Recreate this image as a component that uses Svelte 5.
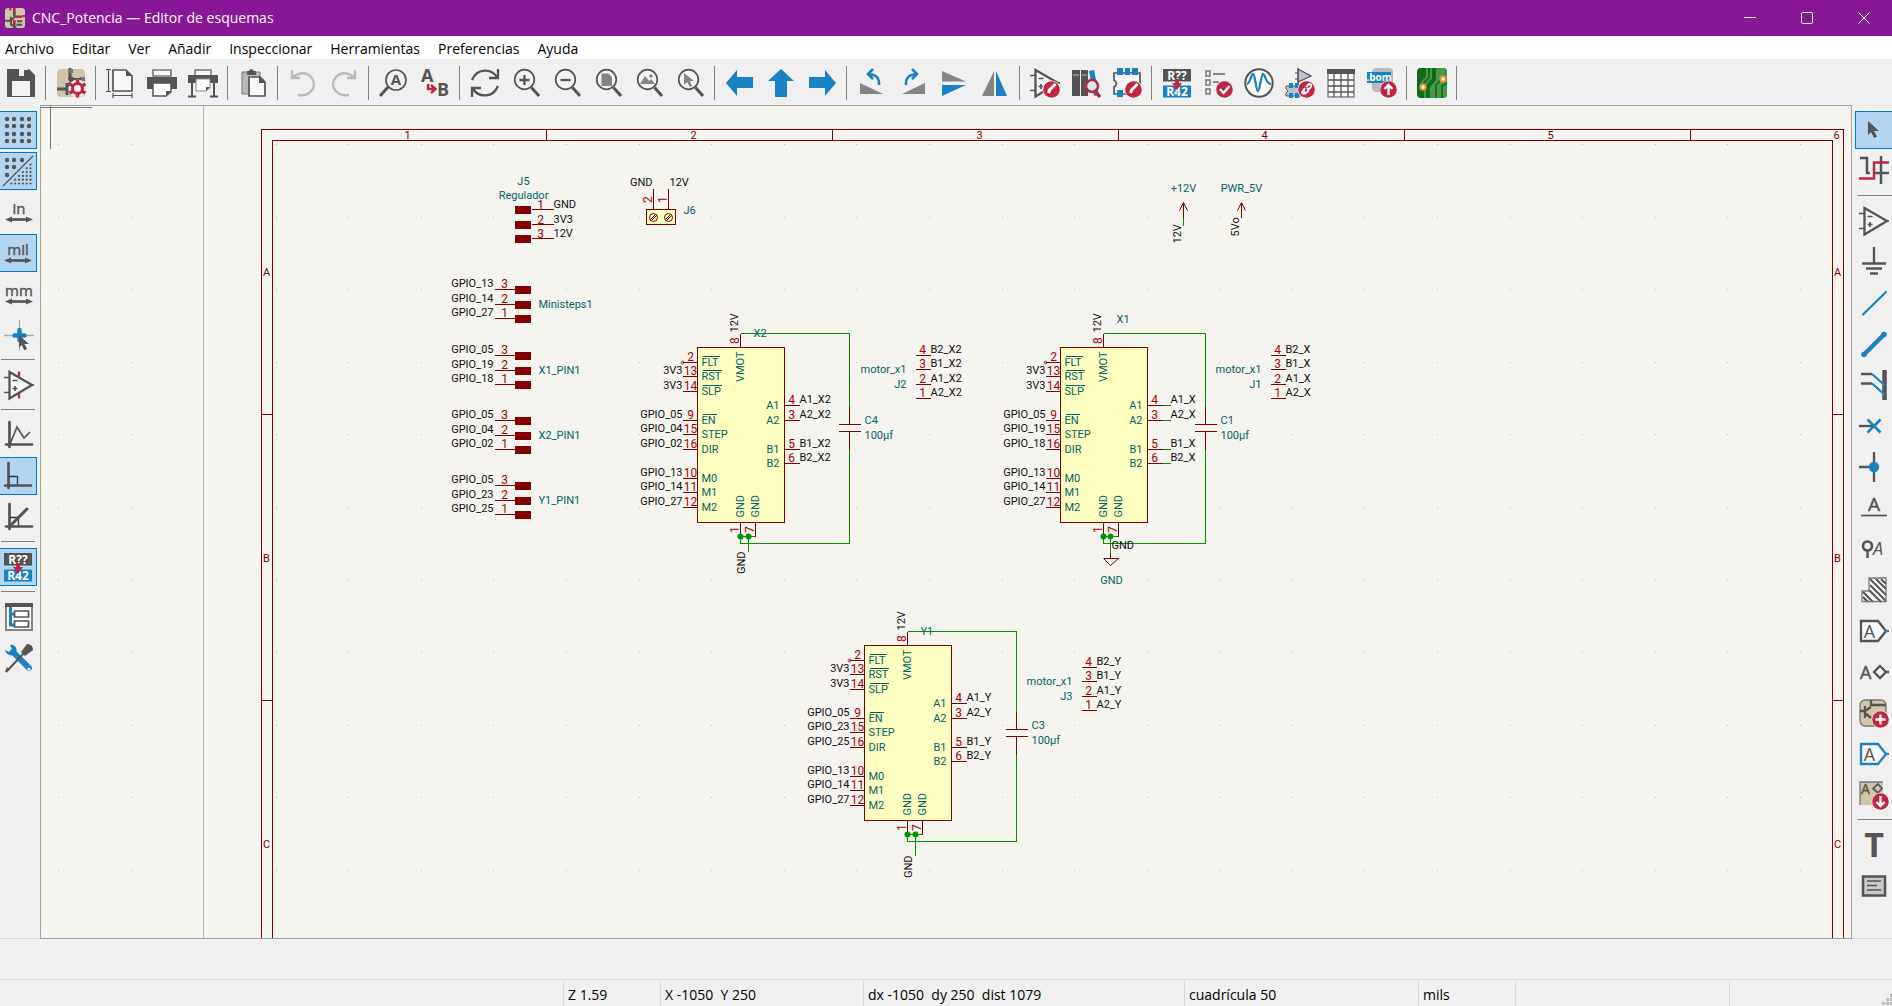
<!-- SchematicEditor -->
<script>
  const menus = ['Archivo', 'Editar', 'Ver', 'Añadir', 'Inspeccionar', 'Herramientas', 'Preferencias', 'Ayuda'];

  const status = [
    { text: '', cls: 'grow' },
    { text: 'Z 1.59', cls: 'small' },
    { text: 'X -1050  Y 250', cls: 'medium' },
    { text: 'dx -1050  dy 250  dist 1079', cls: 'large' },
    { text: 'cuadrícula 50', cls: 'wide' },
    { text: 'mils', cls: 'small' },
    { text: '', cls: 'message' },
    { text: '', cls: 'last' }
  ];

  // shared icon parts, all on a 30x30 grid
  const D = '#545454';
  const B = '#1a81c4';
  const R = '#bf2641';
  const lens = `<circle cx="13.500" cy="11.500" r="9.800" fill="#f3f3f3" stroke="${D}" stroke-width="1.700"/><path d="M20.500 19.500L28 28" stroke="${D}" stroke-width="3"/>`;
  const badge = (mark) => `<circle cx="21.500" cy="21.500" r="9" fill="#f0f0f0"/><circle cx="21.500" cy="21.500" r="8.300" fill="${R}"/><g fill="none" stroke="#fff" stroke-width="2.300">${mark}</g>`;
  const pencil = '<path d="M18.500 25l1-3 6-6" stroke-width="3"/>';
  const opamp = `<path d="M5.500 2L28 15 5.500 28.500z" fill="#f5f5f5" stroke="${D}" stroke-width="2.300"/><path d="M0 7.500h5M0 22.500h5M26 15h4M8.500 10.500h5M8.500 18.500h5M11 16v5" stroke="${D}" stroke-width="1.700"/>`;
  const annotate = `<rect x="1" y="1" width="28" height="12.500" fill="${D}"/><rect x="1" y="17.500" width="28" height="12" fill="${B}"/><text x="15" y="11.500" font-size="12" font-weight="700" fill="#fff" text-anchor="middle">R??</text><text x="15" y="28" font-size="12" font-weight="700" fill="#fff" text-anchor="middle">R42</text><path d="M13 11h4v4h3l-5 7-5-7h3z" fill="${R}"/>`;
  const arrowX = `<path d="M5 22.500h20" stroke="${D}" stroke-width="2.700"/><path d="M1 22.500l7-3v6zM29 22.500l-7-3v6z" fill="${D}"/>`;
  const unit = (name) => `<text x="15" y="17" font-size="15" fill="${D}" stroke="${D}" stroke-width="0.400" text-anchor="middle">${name}</text>${arrowX}`;
  const axes = `<path d="M5.500 2v25M2 24.500h26" stroke="${D}" stroke-width="2.700" stroke-linecap="round"/>`;
  const tag = (c) => `<path d="M2 5h17l8 10-8 10H2z" fill="#f8f8f8" stroke="${c}" stroke-width="2.300"/><path d="M26 15h4" stroke="${B}" stroke-width="2.300"/><text x="10.500" y="22" font-size="18" text-anchor="middle" fill="${D}">A</text>`;
  const cursor = (x, y, s) => `<path transform="translate(${x} ${y}) scale(${s})" d="M0 0v14l3-3 3 6 3-1.500-3-5.500h5z" fill="${D}"/>`;

  const icons = {
    app: `<rect width="30" height="30" rx="5" fill="#d1c4a9"/><path d="M14 0v12M14 18v12" stroke="${R}" stroke-width="4"/><path d="M14 6v7h4M0 19h9M9 13v12l8 4M9 19l6-6" stroke="${D}" stroke-width="3" fill="none"/><path d="M17 13h9" stroke="${R}" stroke-width="3.500"/><path d="M26 12h4M6 2h4M18 20h8M17 25h9" stroke="${D}" stroke-width="3"/>`,
    save: `<path d="M1 1H23l6 6v22H1z" fill="${D}"/><path d="M9 1h13v9H9z" fill="#f0f0f0"/><path d="M9 1h4v7h5V2h4v8H9z" fill="${D}"/><path d="M6 13h18v15H6z" fill="#f3f3f3"/>`,
    setup: `<rect x="1" y="1" width="28" height="28" rx="4" fill="#d1c4a9"/><path d="M14 0v10l6 3M1 21h10M11 15v12M11 19l6-7" stroke="${D}" stroke-width="3" fill="none"/><circle cx="15" cy="11" r="2.700" fill="${D}"/><path d="M12 1h5v4h-5zM24 9h5v4h-5z" fill="#777"/><path d="M15 11h10" stroke="${D}" stroke-width="2"/><circle cx="21.500" cy="20.500" r="7" fill="none" stroke="#f0f0f0" stroke-width="4"/><circle cx="21.500" cy="20.500" r="5" fill="#f0f0f0" stroke="${R}" stroke-width="3"/><g stroke="${R}" stroke-width="3.500"><path d="M21.500 11.500v4M21.500 25.500v4M13.500 16l4 2M29.500 16l-4 2M13.500 25l4-2M29.500 25l-4-2"/></g>`,
    page: `<path d="M7 2h13l6 6v15H7z" fill="#f8f8f8" stroke="${D}" stroke-width="1.700"/><path d="M20 2l6 6h-6z" fill="${D}"/><path d="M2.500 2v21M0 1.500h5M0 23.500h5M7 27.500h19M7 25v5M26 25v5" stroke="${D}" stroke-width="1.200"/>`,
    print: `<path d="M6 2h18v6H6z" fill="#f5f5f5" stroke="#777" stroke-width="1.700"/><path d="M0 9h30v12H0z" fill="${D}"/><path d="M6 15h18v9l-5 4H6z" fill="#fff" stroke="${D}" stroke-width="1.500"/><path d="M24 23l-5 5v-5z" fill="${D}"/>`,
    plot: `<path d="M7 2h16v6H7z" fill="#f5f5f5" stroke="#777" stroke-width="1.500"/><path d="M0 7h30v8H0z" fill="${D}"/><path d="M4 15v13M26 15v13M0 28.500h8M22 28.500h8" stroke="${D}" stroke-width="2"/><path d="M8 11h14v9l-4 3H8z" fill="#fff" stroke="#888"/><path d="M22 19l-4 4v-4z" fill="${D}"/>`,
    paste: `<path d="M4 4h18v22H4z" fill="#b9b9b9" stroke="#777"/><path d="M9 3h2q2-4 5 0h2v4H9z" fill="${D}"/><path d="M11 9h11l5 5v14H11z" fill="#f8f8f8" stroke="${D}" stroke-width="1.700"/><path d="M21 8l7 7h-7z" fill="${D}"/>`,
    undo: `<path d="M4 2v8h8M4 10Q15 1 23 9c8 10-2 20-13 18" fill="none" stroke="#b9b9b9" stroke-width="2.300"/>`,
    redo: `<path d="M26 2v8h-8M26 10Q15 1 7 9c-8 10 2 20 13 18" fill="none" stroke="#b9b9b9" stroke-width="2.300"/>`,
    find: `<circle cx="17" cy="12" r="10" fill="#f3f3f3" stroke="${D}" stroke-width="1.700"/><path d="M9 19L1 28" stroke="${D}" stroke-width="3"/><text x="17" y="17" font-size="15" font-weight="700" fill="${D}" text-anchor="middle">A</text>`,
    replace: `<text x="1" y="14" font-size="18" font-weight="700" fill="${D}">A</text><text x="17" y="28" font-size="18" font-weight="700" fill="${D}">B</text><path d="M8 16v5h7M11 17l4.500 4-4.500 4" fill="none" stroke="${R}" stroke-width="2.500"/>`,
    refresh: `<path d="M2 12C7 0 21 0 27 9M28 1v9h-9M28 18C23 30 9 30 3 21M2 29v-9h9" fill="none" stroke="${D}" stroke-width="2.300"/>`,
    zoomIn: `${lens}<path d="M8.500 12h10M13.500 7v10" stroke="${D}" stroke-width="2.300"/>`,
    zoomOut: `${lens}<path d="M8.500 12h10" stroke="${D}" stroke-width="2.300"/>`,
    zoomPage: `${lens}<path d="M8.500 5.500h7l3.500 3.500v9H8.500z" fill="#848484"/>`,
    zoomObjects: `${lens}<path d="M6 16l5-8 4 5 2-2 4 5z" fill="#848484"/><circle cx="17" cy="8" r="1.700" fill="#848484"/>`,
    zoomSelection: `${lens}<path d="M9 5v12l3-3 3 5 2-1-2-5h4z" fill="#848484"/>`,
    left: `<path d="M1 15L12 2v7h16v11H12v8z" fill="${B}"/>`,
    up: `<path d="M15 1l13 12h-7v16H9V13H2z" fill="${B}"/>`,
    right: `<path d="M29 15L18 2v7H2v11h16v8z" fill="${B}"/>`,
    rotateLeft: `<path d="M3 15l23 11H3z" fill="#848484"/><path d="M22 17q1-10-10-11M16 1l-5 5 5 5" fill="none" stroke="${B}" stroke-width="2.500"/>`,
    rotateRight: `<path d="M27 15L4 26h23z" fill="#848484"/><path d="M8 17q-1-10 10-11M14 1l5 5-5 5" fill="none" stroke="${B}" stroke-width="2.500"/>`,
    mirrorV: `<path d="M3 3l24 10.500H3z" fill="#848484"/><path d="M3 28l24-11H3z" fill="${B}"/>`,
    mirrorH: `<path d="M14 3v25H2z" fill="#848484"/><path d="M16 3v25h11z" fill="${B}"/>`,
    symbolEditor: `${opamp}${badge(pencil)}`,
    browser: `<path d="M1 2h8v26H1zM10 2h7v26h-7z" fill="${D}"/><path d="M18 3l5-1 5 25-5 1z" fill="${B}"/><path d="M2 7h6M11 7h5" stroke="#999" stroke-width="1.500"/><circle cx="21" cy="18" r="6" fill="#dce8f4" stroke="${R}" stroke-width="2.500"/><path d="M24 23l5 6" stroke="${R}" stroke-width="3.500"/>`,
    footprintEditor: `<path d="M2 5h26v21H2v-7q5-3.500 0-7z" fill="#f5f5f5" stroke="${D}" stroke-width="1.700"/><path d="M5 0h6v7H5zM13 0h5v7h-5zM20 0h6v7h-6zM5 22h6v7H5z" fill="${B}"/>${badge(pencil)}`,
    annotate,
    erc: `<path d="M3 3h4v5H3zM3 12h4v5H3zM3 21h4v5H3z" fill="none" stroke="#777" stroke-width="1.500"/><path d="M10 6h12M10 14h6" stroke="#888" stroke-width="2"/>${badge('<path d="M17 21l3.500 4 6-7"/>')}`,
    sim: `<circle cx="15" cy="15" r="13.700" fill="#fff" stroke="${D}" stroke-width="2"/><path d="M3 16c3 0 4-10 6-10s3 17 5 17 3-17 5-17 3 10 8 10" fill="none" stroke="${B}" stroke-width="2.300"/>`,
    assign: `<path d="M13 1l13 7-13 6z" fill="#b9c4d0" stroke="${D}" stroke-width="1.300"/><path d="M10 5h3M10 11h3M13 0v15" stroke="${D}"/><path d="M1 18h16v10H1v-3l2-2-2-2z" fill="#b9c4d0" stroke="${D}"/><path d="M4 15h4v5H4zM10 15h4v5h-4zM4 25h4v5H4zM10 25h4v5h-4z" fill="${B}"/>${badge('<path d="M20 23l-2 2m3-6l3-3q3 0 2 3l-3 3M22 20q3 3-1 5t-4-1l3-4" stroke-width="1.800"/>')}`,
    table: `<path d="M2 2h26v27H2z" fill="#fafafa" stroke="#848484" stroke-width="1.500"/><path d="M1 1h28v5H1z" fill="${D}"/><path d="M2 12h26M2 18h26M2 24h26M8 6v23M15 6v23M22 6v23" stroke="${D}" stroke-width="1.300"/>`,
    bom: `<rect x="5" y="0" width="21" height="24" rx="4" fill="#b9b9b9"/><path d="M0 4h24v11H0z" fill="${B}"/><text x="12" y="13" font-size="10" font-weight="700" fill="#fff" text-anchor="middle">.bom</text>${badge('<path d="M21.500 27V17M17.500 21l4-4 4 4"/>')}`,
    pcb: `<rect x="0" y="0" width="30" height="30" rx="4" fill="#0b6b1b"/><path d="M22 0h4q4 0 4 4v22q0 4-4 4H12V19l6-6V0z" fill="#489648"/><path d="M10 0v9l-5 5v4M14 0v10l-6 7v13" fill="none" stroke="#489648" stroke-width="2"/><path d="M18 0v12l-6 7v11M30 15l-5 3v12M25 11l-6 6v13" fill="none" stroke="#0b6b1b" stroke-width="1.700"/><circle cx="6" cy="19" r="2.700" fill="#fff" stroke="#e8951b" stroke-width="2"/><circle cx="26" cy="11" r="2.700" fill="#fff" stroke="#e8951b" stroke-width="2"/>`,
    grid: [4, 11, 19, 26].map((x) => [4, 11, 19, 26].map((y) => `<circle cx="${x}" cy="${y}" r="2.200" fill="${D}"/>`).join('')).join(''),
    gridOverride: `${[[4, 4], [11, 4], [19, 4], [4, 11], [11, 11], [4, 19]].map(([x, y]) => `<circle cx="${x}" cy="${y}" r="2.200" fill="${D}"/>`).join('')}<path d="M0 30L30 0" stroke="${D}" stroke-width="1.300"/>${[0, 1, 2, 3, 4, 5].map((r) => Array.from({ length: r + 1 }, (_, c) => `<circle cx="${27.5 - c * 3.8}" cy="${8.5 + r * 3.8}" r="1.100" fill="${D}"/>`).join('')).join('')}`,
    inch: unit('in'),
    mil: unit('mil'),
    mm: unit('mm'),
    crosshair: `<path d="M0 15.500h30M15.500 0v30" stroke="#aaa" stroke-width="1.300"/><path d="M10.500 15.500h10M15.500 10v10" stroke="${B}" stroke-width="4.500" stroke-linecap="round"/>${cursor(15, 15, 0.9)}`,
    hiddenPins: `<path d="M15 1.500v27" stroke="${R}" stroke-width="2.300"/>${opamp}`,
    freeAngle: `${axes}<path d="M6 24l7-17 7 11 6-6" fill="none" stroke="${D}" stroke-width="1.700"/>`,
    rightAngle: `${axes}<path d="M6 15.500h8.500v8" fill="none" stroke="#333" stroke-width="1.300"/>`,
    angle45: `${axes}<path d="M6 15.500h8.500v8" fill="none" stroke="#333" stroke-width="1.300"/><path d="M6 24L23 7" stroke="${D}" stroke-width="3" stroke-linecap="round"/>`,
    hierarchy: `<path d="M2 2h26v26H2z" fill="#fafafa" stroke="#848484" stroke-width="2"/><path d="M1 1h28v4H1z" fill="${D}"/><path d="M6.500 5v18h4M6.500 12h4" fill="none" stroke="${B}" stroke-width="3"/><path d="M10.500 9h14v6h-14zM10.500 19h14v6h-14z" fill="#fff" stroke="${D}" stroke-width="1.700"/>`,
    tools: `<path d="M9 9l16 16" stroke="${B}" stroke-width="6" stroke-linecap="round"/><path d="M6 2c5-1 8 4 6 9-4 3-10 1-11-4l4 2 3-3z" fill="${B}"/><circle cx="25" cy="26" r="1.600" fill="#fff"/><path d="M2 29L20 10" stroke="${D}" stroke-width="2"/><path d="M1 29l2-5 3 3zM17 9l6-8q6 0 6 6l-8 6z" fill="${D}"/>`,
    select: cursor(9, 6, 1),
    highlight: `<path d="M1 2h7v15h3M22 0v28M15 17h15" fill="none" stroke="${D}" stroke-width="2.500"/><path d="M0 22.500h15V6.500h15" fill="none" stroke="${R}" stroke-width="2.500"/>`,
    symbol: opamp,
    power: `<path d="M15 0v16M3 16.500h24M7 21.500h16M11 26.500h8" stroke="${D}" stroke-width="2.300"/>`,
    wire: `<path d="M4 26.500L27 4" stroke="${B}" stroke-width="2.200" stroke-linecap="round"/>`,
    bus: `<path d="M5 25.500L25 5.500" stroke="${B}" stroke-width="4.500"/><circle cx="5" cy="25.500" r="2.800" fill="${B}"/><circle cx="25" cy="5.500" r="2.800" fill="${B}"/>`,
    busEntry: `<path d="M2 4h11M2 13.500h11" stroke="${D}" stroke-width="2.300"/><path d="M25.500 0v30" stroke="${D}" stroke-width="4.500"/><path d="M13 4l13 11.500M13 13.500L26 25" stroke="${B}" stroke-width="2.300"/>`,
    noConnect: `<path d="M0 15h14" stroke="${D}" stroke-width="2.300"/><path d="M8.500 8.500l13 13M21.500 8.500l-13 13" stroke="${B}" stroke-width="2.500"/>`,
    junction: `<path d="M0 15h15M15 0v30" stroke="${D}" stroke-width="2.300"/><circle cx="15" cy="15" r="5.200" fill="${B}"/>`,
    label: `<text x="15" y="18" font-size="19" text-anchor="middle" fill="${D}" stroke="${D}" stroke-width="0.500">A</text><path d="M2 22.500h26" stroke="${D}" stroke-width="1.700"/>`,
    netclass: `<circle cx="8.500" cy="12" r="4.500" fill="none" stroke="${D}" stroke-width="2.700"/><path d="M8.500 16v8" stroke="${D}" stroke-width="2.500"/><text x="14" y="21" font-size="18" font-style="italic" fill="${D}">A</text>`,
    ruleArea: `<path d="M10 3h17v24H3V16h7z" fill="#f8f8f8"/><path d="M11 4l16 16M17 4l10 10M22 4l5 5M11 10l16 16M10 15l12 12M4 17l10 10M4 22l5 5" stroke="${D}" stroke-width="2"/><path d="M10 3h17v23.500H3V16h7z" fill="none" stroke="#777" stroke-width="1.300"/>`,
    globalLabel: tag(D),
    hierLabel: `<text x="1" y="22" font-size="18" fill="${D}" stroke="${D}" stroke-width="0.500">A</text><path d="M21 9l6 6-6 6-6-6zM27 15h3" fill="none" stroke="${D}" stroke-width="2.300"/>`,
    sheet: `<rect x="1" y="2" width="26" height="26" rx="5" fill="#d1c4a9" stroke="#777" stroke-width="1.300"/><path d="M12 2v5h15M1 13h5M6 8v12M6 13l6-4M6 15l6 5" fill="none" stroke="${D}" stroke-width="2.300"/>${badge('<path d="M16.500 21.500h10M21.500 16.500v10"/>')}`,
    sheetPin: tag(B),
    importPin: `<path d="M1 2h23v23H1z" fill="#d1c4a9"/><path d="M1 25V2h23" fill="none" stroke="#777" stroke-width="1.300"/><text x="2" y="14" font-size="14" fill="${D}" stroke="${D}" stroke-width="0.400">A</text><path d="M19 4l4 4.500-4 4.500-5-4.500z" fill="none" stroke="${D}" stroke-width="1.700"/>${badge('<path d="M21.500 16v10M17.500 22l4 4 4-4"/>')}`,
    text: `<text x="15" y="27" font-size="34" font-weight="700" text-anchor="middle" fill="${D}">T</text>`,
    textBox: `<path d="M4 5.500h22v19H4z" fill="#c9c9c9" stroke="${D}" stroke-width="2.500"/><path d="M8 10h14M8 14.500h10M8 19h14" stroke="${D}" stroke-width="1.500"/>`
  };

  const topTools = [
    ['save', 'Guardar'], null,
    ['setup', 'Configuración del esquema'], null,
    ['page', 'Ajustes de página'], ['print', 'Imprimir'], ['plot', 'Trazar'], null,
    ['paste', 'Pegar'], null,
    ['undo', 'Deshacer'], ['redo', 'Rehacer'], null,
    ['find', 'Buscar'], ['replace', 'Buscar y reemplazar'], null,
    ['refresh', 'Refrescar'], ['zoomIn', 'Acercar'], ['zoomOut', 'Alejar'], ['zoomPage', 'Ajustar a página'],
    ['zoomObjects', 'Ajustar a objetos'], ['zoomSelection', 'Ajustar a selección'], null,
    ['left', 'Atrás'], ['up', 'Subir'], ['right', 'Adelante'], null,
    ['rotateLeft', 'Rotar a la izquierda'], ['rotateRight', 'Rotar a la derecha'],
    ['mirrorV', 'Reflejar en vertical'], ['mirrorH', 'Reflejar en horizontal'], null,
    ['symbolEditor', 'Editor de símbolos'], ['browser', 'Explorar bibliotecas'], ['footprintEditor', 'Editor de huellas'], null,
    ['annotate', 'Anotar'], ['erc', 'Comprobar reglas'], ['sim', 'Simulador'], ['assign', 'Asignar huellas'],
    ['table', 'Editar campos'], ['bom', 'Generar lista de materiales'], null,
    ['pcb', 'Abrir placa'], null
  ];

  const leftTools = [
    ['grid', 'Mostrar cuadrícula'], ['gridOverride', 'Cuadrículas alternativas'], ['inch', 'Pulgadas'],
    ['mil', 'Mils'], ['mm', 'Milímetros'], ['crosshair', 'Cursor completo'], null,
    ['hiddenPins', 'Pines ocultos'], null,
    ['freeAngle', 'Ángulo libre'], ['rightAngle', 'Ángulo recto'], ['angle45', 'Ángulo de 45 grados'], null,
    ['annotate', 'Anotar automáticamente'], null,
    ['hierarchy', 'Jerarquía'], ['tools', 'Propiedades']
  ];

  const rightTools = [
    ['select', 'Seleccionar'], ['highlight', 'Resaltar red'], null,
    ['symbol', 'Añadir símbolo'], ['power', 'Añadir alimentación'], ['wire', 'Añadir cable'], ['bus', 'Añadir bus'],
    ['busEntry', 'Entrada a bus'], ['noConnect', 'No conectado'], ['junction', 'Unión'], ['label', 'Etiqueta'],
    ['netclass', 'Directiva de clase'], ['ruleArea', 'Área de reglas'], ['globalLabel', 'Etiqueta global'],
    ['hierLabel', 'Etiqueta jerárquica'], ['sheet', 'Añadir hoja'], ['sheetPin', 'Pin de hoja'],
    ['importPin', 'Importar pines'], null,
    ['text', 'Texto'], ['textBox', 'Cuadro de texto']
  ];

  let toggled = $state(['grid', 'gridOverride', 'mil', 'rightAngle', 'annotate']);
  let tool = $state('select');

  function toggle(name) {
    toggled = toggled.includes(name) ? toggled.filter((n) => n !== name) : [...toggled, name];
  }

  // sheet geometry
  const columns = [408, 694, 980, 1265, 1551, 1837];
  const rows = [272, 558, 844];
  const dots = [];
  for (let i = 0; i < 25; i++) {
    for (let j = 0; j < 11; j++) {
      dots.push([Math.round(58 + i * 72.58), Math.round(144 + j * 72.6)]);
    }
  }

  const headers = [
    { name: 'Ministeps1', y: 289, nets: ['GPIO_13', 'GPIO_14', 'GPIO_27'] },
    { name: 'X1_PIN1', y: 355, nets: ['GPIO_05', 'GPIO_19', 'GPIO_18'] },
    { name: 'X2_PIN1', y: 420, nets: ['GPIO_05', 'GPIO_04', 'GPIO_02'] },
    { name: 'Y1_PIN1', y: 485, nets: ['GPIO_05', 'GPIO_23', 'GPIO_25'] }
  ];
  const step = [0, 15, 29];

  const leftPins = [
    { n: 2, name: 'FLT', y: 15, bar: 17 },
    { n: 13, name: 'RST', y: 29, bar: 19 },
    { n: 14, name: 'SLP', y: 44, bar: 19 },
    { n: 9, name: 'EN', y: 73, bar: 14 },
    { n: 15, name: 'STEP', y: 87 },
    { n: 16, name: 'DIR', y: 102 },
    { n: 10, name: 'M0', y: 131 },
    { n: 11, name: 'M1', y: 145 },
    { n: 12, name: 'M2', y: 160 }
  ];
  const rightPins = [
    { n: 4, name: 'A1', y: 58 },
    { n: 3, name: 'A2', y: 73 },
    { n: 5, name: 'B1', y: 102 },
    { n: 6, name: 'B2', y: 116 }
  ];

  const drivers = [
    { ref: 'X2', x: 697, y: 347, refY: -10, axis: 'X2', step: 'GPIO_04', dir: 'GPIO_02', stub: 0, capX: 152, capY: 59, cap: 'C4', gnd: 51, gndY: 204 },
    { ref: 'X1', x: 1060, y: 347, refY: -24, axis: 'X', step: 'GPIO_19', dir: 'GPIO_18', stub: 8, capX: 145, capY: 59, cap: 'C1', gnd: 50, gndY: 205, symbol: true },
    { ref: 'Y1', x: 864, y: 645, refY: -10, axis: 'Y', step: 'GPIO_23', dir: 'GPIO_25', stub: 0, capX: 152, capY: 66, cap: 'C3', gnd: 51, gndY: 210 }
  ];

  function netsOf(d) {
    return ['', '3V3', '3V3', 'GPIO_05', d.step, d.dir, 'GPIO_13', 'GPIO_14', 'GPIO_27'];
  }

  const motors = [
    { ref: 'J2', x: 915, y: 355, axis: 'X2' },
    { ref: 'J1', x: 1270, y: 355, axis: 'X' },
    { ref: 'J3', x: 1081, y: 667, axis: 'Y' }
  ];
  const coils = [['4', 'B2', 0], ['3', 'B1', 14], ['2', 'A1', 29], ['1', 'A2', 43]];
</script>

{#snippet icon(name)}
  <svg class="icon" viewBox="0 0 30 30" aria-hidden="true">{@html icons[name]}</svg>
{/snippet}

{#snippet vtext(x, y, value, cls)}
  <text {x} {y} class={cls} transform="rotate(-90 {x} {y})">{value}</text>
{/snippet}

<div class="window">
  <header class="titlebar">
    <svg class="app-icon" viewBox="0 0 30 30" aria-hidden="true">{@html icons.app}</svg>
    <h1>CNC_Potencia — Editor de esquemas</h1>
    <div class="window-buttons">
      <button aria-label="Minimizar"><svg viewBox="0 0 12 12"><path d="M0 5.500h12" /></svg></button>
      <button aria-label="Maximizar"><svg viewBox="0 0 12 12"><rect x="0.500" y="0.500" width="11" height="11" rx="1" /></svg></button>
      <button aria-label="Cerrar"><svg viewBox="0 0 12 12"><path d="M0.500 0.500l11 11M11.500 0.500l-11 11" /></svg></button>
    </div>
  </header>

  <nav class="menubar">
    {#each menus as menu}
      <button>{menu}</button>
    {/each}
  </nav>

  <div class="toolbar top">
    {#each topTools as item}
      {#if item}
        <button aria-label={item[1]}>{@render icon(item[0])}</button>
      {:else}
        <span class="sep"></span>
      {/if}
    {/each}
  </div>

  <main>
    <div class="toolbar side left">
      {#each leftTools as item}
        {#if item}
          <button
            class:active={toggled.includes(item[0])}
            aria-label={item[1]}
            aria-pressed={toggled.includes(item[0])}
            onclick={() => toggle(item[0])}
          >{@render icon(item[0])}</button>
        {:else}
          <span class="sep"></span>
        {/if}
      {/each}
    </div>

    <div class="canvas">
      <svg class="sheet" role="img" aria-label="Esquema">
        <g transform="translate(-40.5 -105.5)">
          {#each dots as [x, y]}
            <path class="dot" d="M{x - 0.5} {y}h1" />
          {/each}
          <path class="page-edge" d="M203 100V2000" />
          <path class="cursor" d="M40 107H91M50 100V148" />

          <!-- drawing frame -->
          <path class="frame" d="M261 2000V129H1843V2000M272 2000V140H1832V2000" />
          {#each columns as x, i}
            <text class="mark" {x} y="139">{i + 1}</text>
            {#if i < 5}
              <path class="frame" d="M{546 + i * 286} 129v11" />
            {/if}
          {/each}
          {#each rows as y, i}
            <text class="mark" x="267" y={y + 4}>{'ABC'[i]}</text>
            <text class="mark" x="1838" y={y + 4}>{'ABC'[i]}</text>
            {#if i < 2}
              <path class="frame" d="M261 {y + 142}h11M1832 {y + 142}h11" />
            {/if}
          {/each}

          <!-- regulator -->
          <text class="name mid" x="524" y="185">J5</text>
          <text class="name mid" x="524" y="199">Regulador</text>
          {#each ['GND', '3V3', '12V'] as net, i}
            <rect class="pad" x="514.500" y={205.5 + step[i]} width="16" height="8" />
            <path class="pin" d="M531 {209 + step[i]}h22" />
            <text class="num" x="541" y={209 + step[i]}>{i + 1}</text>
            <text class="net" x="554" y={208 + step[i]}>{net}</text>
          {/each}

          {#each headers as h}
            {#each h.nets as net, i}
              <text class="net end" x="494" y={h.y - 2 + step[i]}>{net}</text>
              <path class="pin" d="M494 {h.y + step[i]}h21" />
              <text class="num" x="505" y={h.y - 1 + step[i]}>{3 - i}</text>
              <rect class="pad" x="514.500" y={h.y - 3.5 + step[i]} width="16" height="8" />
            {/each}
            <text class="name" x="539" y={h.y + 19}>{h.name}</text>
          {/each}

          <!-- supply terminal -->
          <text class="net end" x="653" y="186">GND</text>
          <text class="net" x="670" y="186">12V</text>
          <rect class="body" x="646" y="209" width="29" height="15" />
          {#each [653, 668] as x, i}
            <path class="pin" d="M{x} 188v21" />
            {@render vtext(x - 1, 200, 2 - i, 'num')}
            <circle class="screw" cx={x} cy="217" r="4" />
            <path class="screw" d="M{x - 3} 219l5-5M{x - 2} 220l5-5" />
          {/each}
          <text class="name" x="684" y="214">J6</text>

          <!-- power flags -->
          <text class="name mid" x="1184" y="192">+12V</text>
          <path class="pin" d="M1183 202v15" />
          <path class="slant" d="M1179 210l4-8 4 8" />
          <path class="wire" d="M1183 217v8" />
          {@render vtext(1181, 244, '12V', 'net')}
          <text class="name mid" x="1242" y="192">PWR_5V</text>
          <path class="pin" d="M1241 202v15" />
          <path class="slant" d="M1237 210l4-8 4 8" />
          {@render vtext(1239, 237, '5Vo', 'net')}

          {#each drivers as d}
            <g transform="translate({d.x} {d.y})">
              <path class="wire" d="M43 -14H{d.capX}V196H43V189H58M{d.gnd} 189V{d.gndY}" />
              <path class="cap-gap" d="M{d.capX} {d.capY}v43" />
              <path class="pin" d="M{d.capX} {d.capY}v18m-11 0h22m-11 7v18m-11 -18h22" />
              <text class="name" x={d.capX + 16} y={d.capY + 18}>{d.cap}</text>
              <text class="name" x={d.capX + 16} y={d.capY + 33}>100µf</text>

              <rect class="body" width="87" height="175" />
              <circle class="loose" cx="-15" cy="15" r="1.500" />
              {#each leftPins as p, i}
                <path class="pin" d="M-15 {p.y}h15" />
                <text class="num" x="-6" y={p.y - 1}>{p.n}</text>
                <text class="name" x="5" y={p.y + 4}>{p.name}</text>
                {#if p.bar}
                  <path class="bar" d="M5 {p.y - 6}h{p.bar}" />
                {/if}
                <text class="net end" x="-14" y={p.y - 2}>{netsOf(d)[i]}</text>
              {/each}
              {#each rightPins as p}
                <path class="pin" d="M87 {p.y}h15" />
                <text class="num" x="95" y={p.y - 1}>{p.n}</text>
                <text class="name end" x="83" y={p.y + 4}>{p.name}</text>
                {#if d.stub}
                  <path class="wire" d="M102 {p.y}h{d.stub}" />
                {/if}
                <text class="net" x={103 + d.stub} y={p.y - 2}>{p.name}_{d.axis}</text>
              {/each}

              <path class="pin" d="M43 -14v14M43 175v14M58 175v14" />
              {@render vtext(42, -6, '8', 'num')}
              {@render vtext(41, -14, '12V', 'net')}
              {@render vtext(47, 5, 'VMOT', 'name end')}
              {@render vtext(47, 171, 'GND', 'name')}
              {@render vtext(62, 171, 'GND', 'name')}
              {@render vtext(42, 183, '1', 'num')}
              {@render vtext(57, 183, '7', 'num')}
              <circle class="junction" cx="43" cy="189" r="3" />
              <circle class="junction" cx={d.gnd} cy="189" r="3" />
              <text class="name" x="57" y={d.refY}>{d.ref}</text>

              {#if d.symbol}
                <path class="pin" d="M50 205v6M43 211h15" />
                <path class="slant" d="M43 211l7 7 8-7" />
                <text class="net" x="52" y="202">GND</text>
                <text class="name mid" x="52" y="237">GND</text>
              {:else}
                {@render vtext(48, d.gndY + 1, 'GND', 'net end')}
              {/if}
            </g>
          {/each}

          {#each motors as m}
            <g transform="translate({m.x} {m.y})">
              {#each coils as [n, coil, y]}
                <path class="pin" d="M0 {y}h15" />
                <text class="num" x="8" y={y - 1}>{n}</text>
                <text class="net" x="16" y={y - 2}>{coil}_{m.axis}</text>
              {/each}
              <text class="name end" x="-8" y="18">motor_x1</text>
              <text class="name end" x="-8" y="33">{m.ref}</text>
            </g>
          {/each}
        </g>
      </svg>
    </div>

    <div class="toolbar side right">
      {#each rightTools as item}
        {#if item}
          <button
            class:active={tool === item[0]}
            aria-label={item[1]}
            aria-pressed={tool === item[0]}
            onclick={() => (tool = item[0])}
          >{@render icon(item[0])}</button>
        {:else}
          <span class="sep"></span>
        {/if}
      {/each}
    </div>
  </main>

  <div class="messages"></div>

  <footer class="statusbar">
    {#each status as field}
      <span class="field {field.cls}">{field.text}</span>
    {/each}
    <svg class="grip" viewBox="0 0 12 12" aria-hidden="true">
      <path d="M8 0h3v3H8zM4 4h3v3H4zM8 4h3v3H8zM0 8h3v3H0zM4 8h3v3H4zM8 8h3v3H8z" />
    </svg>
  </footer>
</div>

<style>
  :global(body) {
    margin: 0;
    overflow: hidden;
  }

  .window {
    display: flex;
    flex-direction: column;
    height: 100vh;
    background: #f0f0f0;
    color: #000;
    font-family: "Open Sans", "Noto Sans", sans-serif;
    font-size: 14px;
  }

  button {
    border: none;
    background: none;
    padding: 0;
    font: inherit;
    color: inherit;
  }

  .titlebar {
    display: flex;
    align-items: center;
    flex: none;
    height: 36px;
    padding-left: 5px;
    background: #881798;
    color: #fff;
  }

  .app-icon {
    width: 20px;
    height: 20px;
  }

  h1 {
    flex: 1;
    margin: 0 0 0 7px;
    font-size: 14px;
    line-height: 34px;
    font-weight: 400;
  }

  .window-buttons {
    display: flex;
    height: 100%;
  }

  .window-buttons button {
    display: flex;
    align-items: center;
    justify-content: center;
    width: 57px;
  }

  .window-buttons svg {
    width: 12px;
    height: 12px;
    fill: none;
    stroke: #fff;
  }

  .menubar {
    display: flex;
    flex: none;
    gap: 18px;
    box-sizing: border-box;
    height: 23px;
    padding: 2px 5px 0;
    background: #fff;
  }

  .toolbar {
    display: flex;
    flex: none;
    align-items: center;
  }

  .toolbar button {
    display: flex;
    align-items: center;
    justify-content: center;
    flex: none;
    box-sizing: border-box;
    width: 37px;
    height: 38px;
  }

  .toolbar button.active {
    background: #b3d5f1;
    border: 1px solid #0078d7;
  }

  .icon {
    flex: none;
    width: 30px;
    height: 30px;
    overflow: visible;
    font-family: "Open Sans", "Noto Sans", sans-serif;
  }

  .top {
    gap: 4px;
    box-sizing: border-box;
    height: 46px;
    padding: 2px 0 0 2px;
  }

  .top .sep {
    width: 1px;
    height: 34px;
    margin: 0 2px;
    background: #808080;
  }

  main {
    display: flex;
    flex: 1;
    min-height: 0;
  }

  .side {
    flex-direction: column;
    gap: 3px;
    box-sizing: border-box;
    width: 40px;
    padding-top: 6px;
    border-bottom: 1px solid #d9d9d9;
    overflow: hidden;
  }

  .side .sep {
    flex: none;
    width: 34px;
    height: 1px;
    margin: 2px 0 3px;
    background: #808080;
  }

  .left {
    align-items: flex-start;
  }

  .left .sep {
    margin-left: 1px;
  }

  .left button.active {
    border-left: none;
  }

  .right {
    align-items: flex-end;
  }

  .right button.active {
    border-right: none;
  }

  .canvas {
    flex: 1;
    min-width: 0;
    border: 1px solid #a0a0a0;
    background: #f5f4ef;
  }

  .sheet {
    display: block;
    width: 100%;
    height: 100%;
    font-family: Roboto, "Open Sans", sans-serif;
    font-size: 11px;
  }

  .sheet text {
    translate: -1px -1px;
  }

  .sheet path,
  .sheet rect {
    shape-rendering: crispEdges;
    fill: none;
  }

  .sheet .dot {
    stroke: #b9b9b7;
  }

  .sheet .page-edge {
    stroke: #b0b0ae;
  }

  .sheet .cursor {
    stroke: #777;
  }

  .sheet .frame,
  .sheet .pin {
    stroke: #840000;
  }

  .sheet .pad {
    fill: #840000;
  }

  .sheet .body {
    fill: #ffffc2;
    stroke: #840000;
  }

  .sheet .screw,
  .sheet .slant {
    fill: none;
    stroke: #840000;
    shape-rendering: auto;
  }

  .sheet .wire {
    stroke: #009600;
  }

  .sheet .cap-gap {
    stroke: #f5f4ef;
  }

  .sheet .bar {
    stroke: #006464;
  }

  .junction {
    fill: #009600;
  }

  .loose {
    fill: #c9a0a0;
    stroke: #a85050;
  }

  .mark {
    fill: #840000;
    text-anchor: middle;
  }

  .name {
    fill: #006464;
  }

  .net {
    fill: #0f0f0f;
  }

  .num {
    fill: #a90000;
    font-size: 12px;
    text-anchor: middle;
  }

  .mid {
    text-anchor: middle;
  }

  .end {
    text-anchor: end;
  }

  .messages {
    flex: none;
    height: 40px;
  }

  .statusbar {
    display: flex;
    flex: none;
    position: relative;
    height: 26px;
    border-top: 1px solid #d7d7d7;
    line-height: 28px;
  }

  .field {
    box-sizing: border-box;
    margin-top: 1px;
    padding-left: 4px;
    border-left: 1px solid #d7d7d7;
    white-space: pre;
    overflow: hidden;
  }

  .grow {
    flex: 1;
    border-left: none;
  }

  .small {
    width: 97px;
  }

  .medium {
    width: 203px;
  }

  .large {
    width: 321px;
  }

  .wide {
    width: 234px;
  }

  .message {
    width: 214px;
  }

  .last {
    width: 163px;
  }

  .grip {
    position: absolute;
    right: -2px;
    bottom: 0;
    width: 12px;
    height: 12px;
    fill: #bfbfbf;
  }
</style>
